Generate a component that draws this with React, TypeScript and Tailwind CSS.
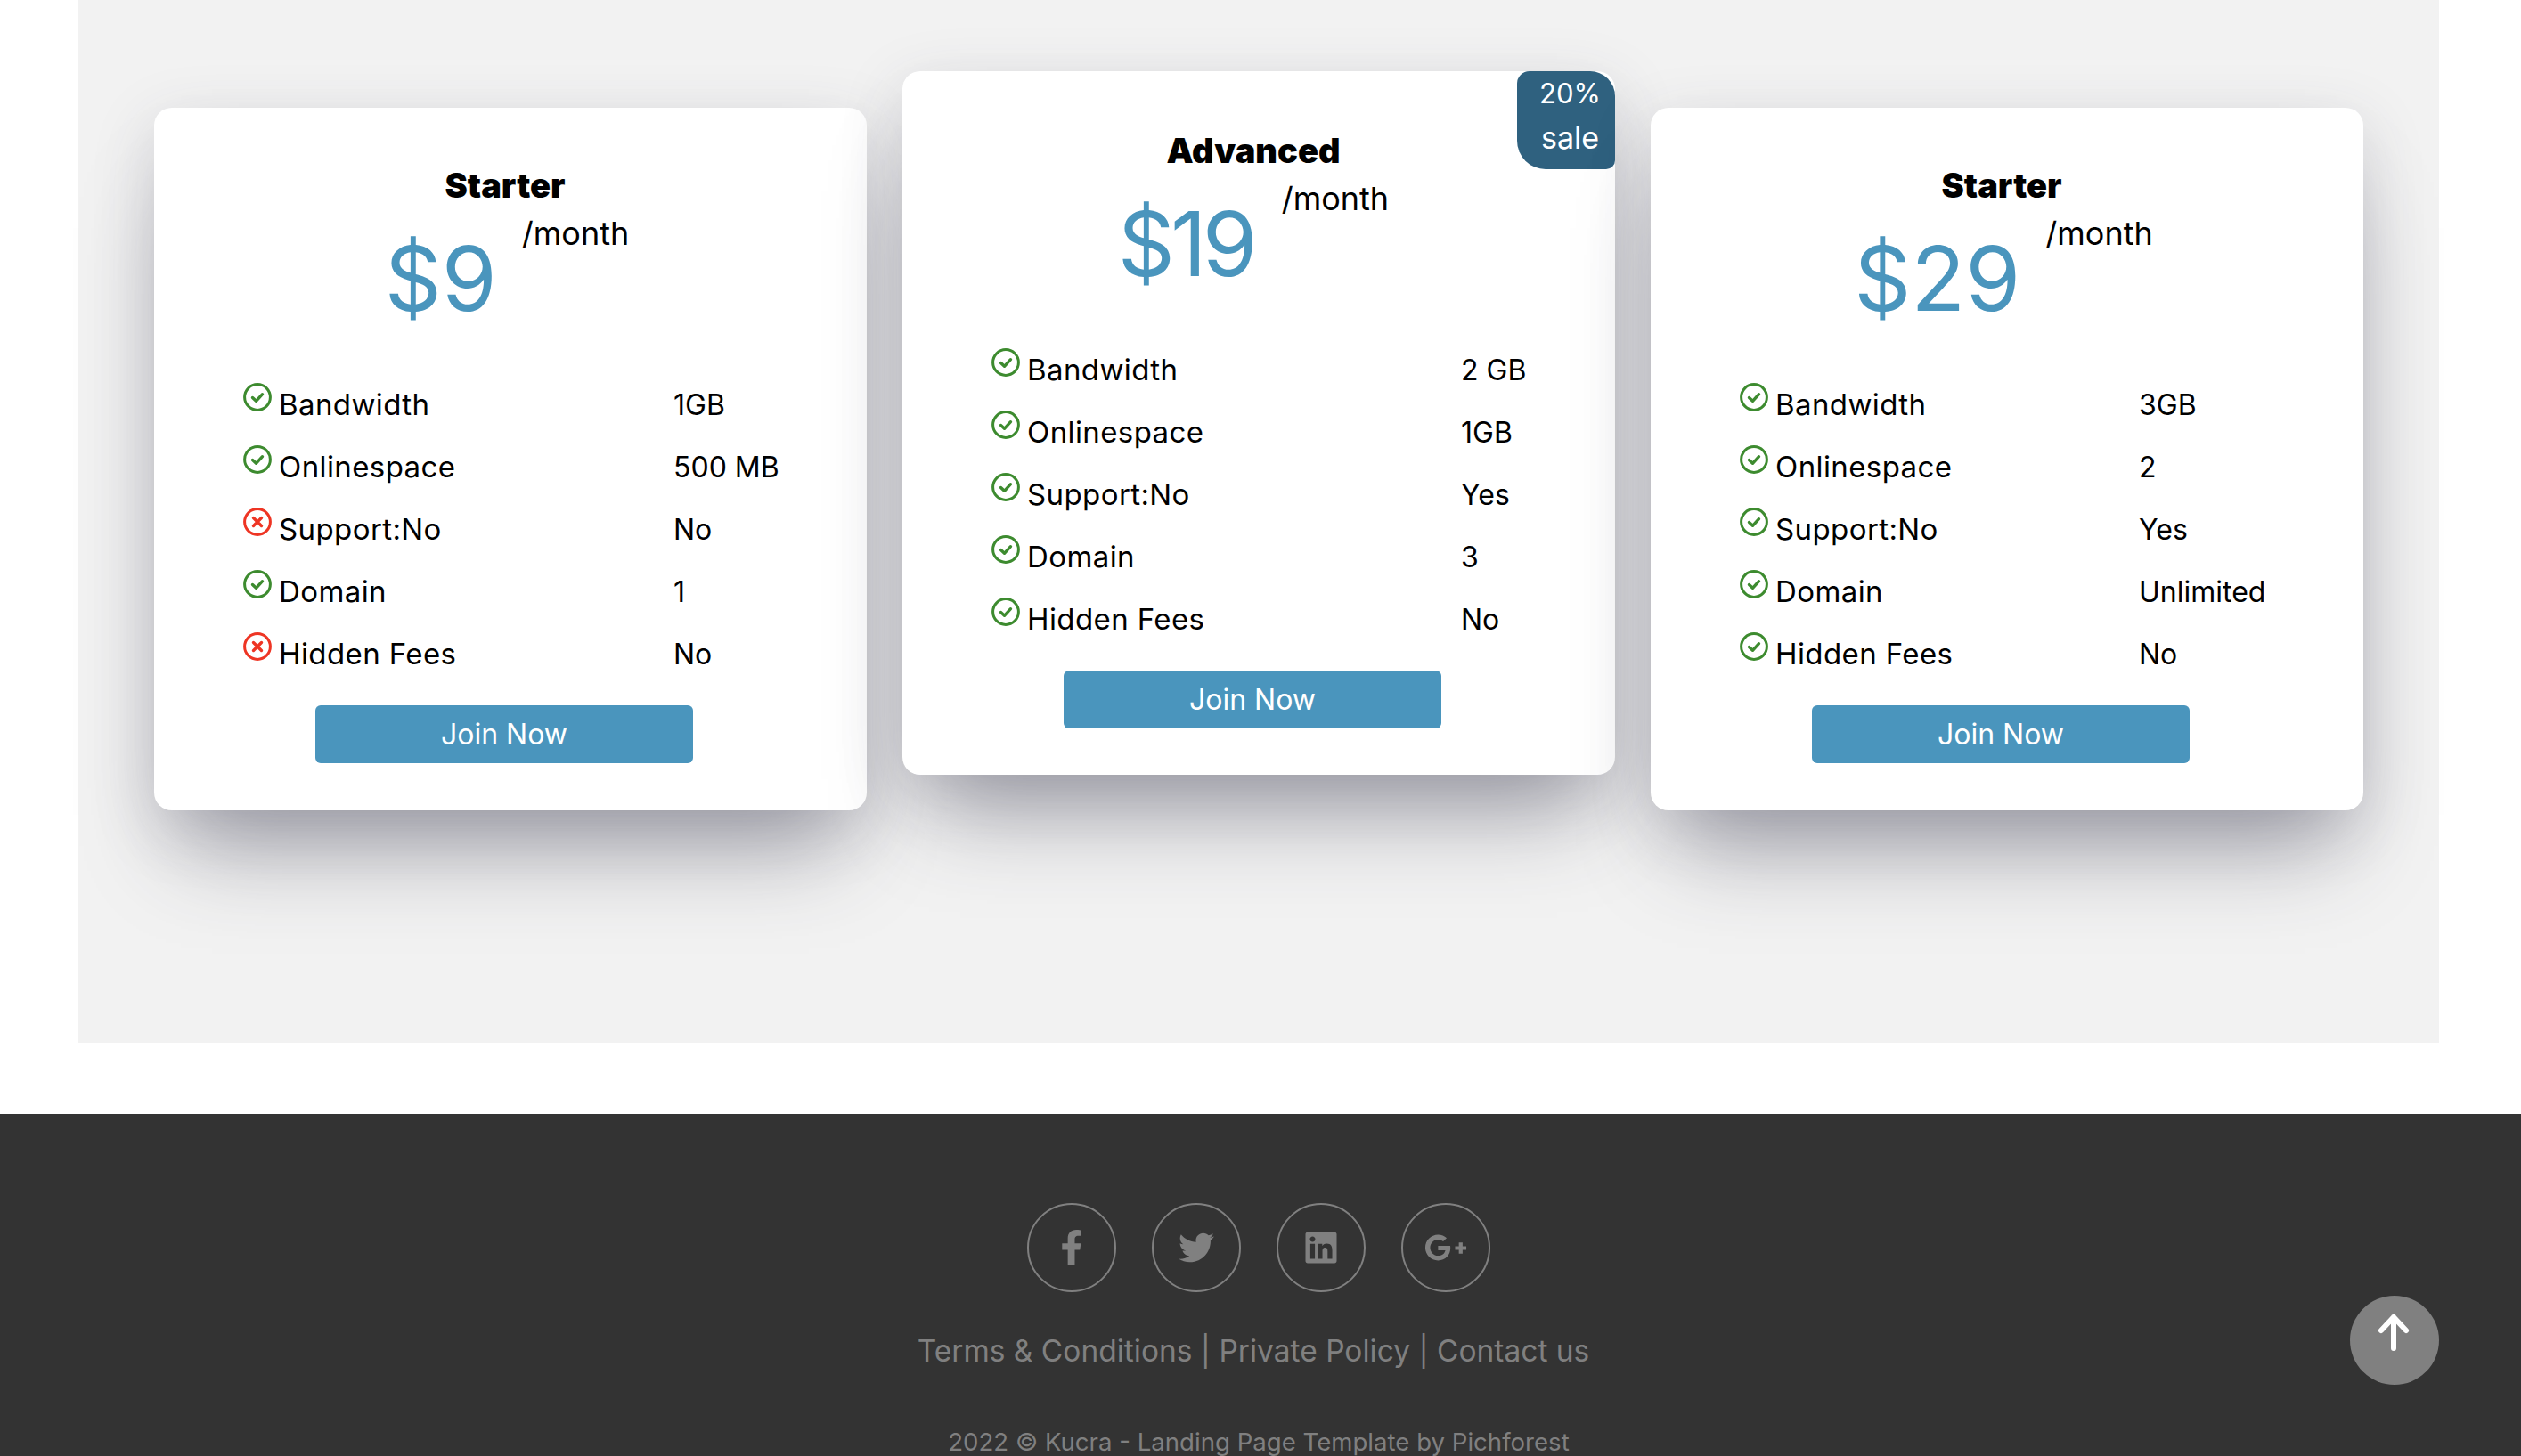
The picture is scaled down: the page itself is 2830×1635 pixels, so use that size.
import React from 'react';
import { FaFacebookF, FaTwitter, FaLinkedin, FaGooglePlusG } from 'react-icons/fa';

type Feature = { label: string; value: string; ok: boolean };

interface Plan {
  title: string;
  price: string;
  priceClass: string;
  labelCol: string;
  featured?: boolean;
  features: Feature[];
}

const plans: Plan[] = [
  {
    title: 'Starter',
    price: '$9',
    priceClass: '',
    labelCol: 'grid-cols-[483px_1fr]',
    features: [
      { label: 'Bandwidth', value: '1GB', ok: true },
      { label: 'Onlinespace', value: '500 MB', ok: true },
      { label: 'Support:No', value: 'No', ok: false },
      { label: 'Domain', value: '1', ok: true },
      { label: 'Hidden Fees', value: 'No', ok: false },
    ],
  },
  {
    title: 'Advanced',
    price: '$19',
    priceClass: 'tracking-[-5px] -translate-x-[4px]',
    labelCol: 'grid-cols-[527px_1fr]',
    featured: true,
    features: [
      { label: 'Bandwidth', value: '2 GB', ok: true },
      { label: 'Onlinespace', value: '1GB', ok: true },
      { label: 'Support:No', value: 'Yes', ok: true },
      { label: 'Domain', value: '3', ok: true },
      { label: 'Hidden Fees', value: 'No', ok: true },
    ],
  },
  {
    title: 'Starter',
    price: '$29',
    priceClass: '',
    labelCol: 'grid-cols-[448px_1fr]',
    features: [
      { label: 'Bandwidth', value: '3GB', ok: true },
      { label: 'Onlinespace', value: '2', ok: true },
      { label: 'Support:No', value: 'Yes', ok: true },
      { label: 'Domain', value: 'Unlimited', ok: true },
      { label: 'Hidden Fees', value: 'No', ok: true },
    ],
  },
];

function StatusIcon({ ok }: { ok: boolean }) {
  return (
    <svg viewBox="0 0 32 32" className={`w-8 h-8 shrink-0 mt-[-18px] ${ok ? 'text-[#3d8b2f]' : 'text-[#ee3524]'}`} fill="none" stroke="currentColor">
      <circle cx="16" cy="16" r="14.4" strokeWidth="3" />
      {ok ? (
        <path d="M10.5 16.5l4 3.8 7-7.6" strokeWidth="3.4" strokeLinecap="round" strokeLinejoin="round" />
      ) : (
        <path d="M11.5 11.5l9 9M20.5 11.5l-9 9" strokeWidth="3.4" strokeLinecap="round" />
      )}
    </svg>
  );
}

function PlanCard({ plan }: { plan: Plan }) {
  return (
    <div className={`relative w-[800px] bg-white rounded-[20px] shadow-[0_20px_70px_0_rgba(60,60,85,0.17),0_70px_100px_-30px_rgba(50,50,70,0.4)] flex flex-col ${plan.featured ? '-mt-[41px] h-[790px] pt-[2px]' : 'h-[789px]'}`}>
      {plan.featured && (
        <div className="absolute top-0 right-0 w-[110px] h-[110px] bg-[#2f617f] text-white leading-[50px] rounded-tl-[14px] rounded-tr-[28px] rounded-bl-[32px] rounded-br-[10px] pl-[9px] text-center">
          <span className="block text-[31px]">20%</span>
          <span className="block text-[34px]">sale</span>
        </div>
      )}
      <h3 className="pt-[60px] pr-3 text-center text-[38px] leading-[54px] font-black text-black">{plan.title}</h3>
      <div className="h-[185px] pr-2 flex items-start justify-center gap-[28px]">
        <span className={`mt-[18px] text-[100px] leading-[120px] text-[#4a95bd] ${plan.priceClass}`}>{plan.price}</span>
        <span className="mt-[7px] text-[36px] leading-10 text-black">/month</span>
      </div>
      <ul className="pl-[100px]">
        {plan.features.map((f) => (
          <li key={f.label} className={`grid ${plan.labelCol} h-[70px] items-center text-[32px] text-black`}>
            <span className="flex items-center gap-2 text-[33px] tracking-[0.4px]">
              <StatusIcon ok={f.ok} />
              {f.label}
            </span>
            <span>{f.value}</span>
          </li>
        ))}
      </ul>
      <button className="ml-[181px] mt-[22px] w-[424px] h-[65px] rounded-[6px] bg-[#4a95bd] text-white text-[32px]">Join Now</button>
    </div>
  );
}

const socials = [
  { Icon: FaFacebookF, size: 'text-[40px]' },
  { Icon: FaTwitter, size: 'text-[40px]' },
  { Icon: FaLinkedin, size: 'text-[40px]' },
  { Icon: FaGooglePlusG, size: 'text-[48px]' },
];

export default function App() {
  return (
    <div className="relative h-[1635px] overflow-hidden bg-white font-['Inter','Liberation_Sans',sans-serif]">
      <section className="ml-[88px] w-[2650px] h-[1171px] bg-[#f2f2f2] pt-[121px] flex justify-center items-start gap-10">
        {plans.map((plan) => (
          <PlanCard key={plan.price} plan={plan} />
        ))}
      </section>

      <footer className="mt-20 h-[384px] bg-[#333333] text-[#808080] flex flex-col items-center">
        <div className="mt-[100px] flex gap-10 pr-1">
          {socials.map(({ Icon, size }, i) => (
            <a key={i} className={`w-[100px] h-[100px] rounded-full border-2 border-[#808080] flex items-center justify-center ${size}`}>
              <Icon />
            </a>
          ))}
        </div>
        <p className="mt-[41px] pr-4 text-[33.5px] leading-[50px]">Terms &amp; Conditions | Private Policy | Contact us</p>
        <p className="mt-[56px] pr-1 text-[27.6px] leading-[42px]">2022 © Kucra - Landing Page Template by Pichforest</p>
      </footer>

      <button className="absolute left-[2638px] top-[1455px] w-[100px] h-[100px] rounded-full bg-[#808080] flex items-center justify-center">
        <svg viewBox="0 0 100 100" className="w-[100px] h-[100px]" fill="none" stroke="white" strokeWidth="6" strokeLinecap="round" strokeLinejoin="round">
          <path d="M49 59V24M35 39l14-15 14 15" />
        </svg>
      </button>
    </div>
  );
}
